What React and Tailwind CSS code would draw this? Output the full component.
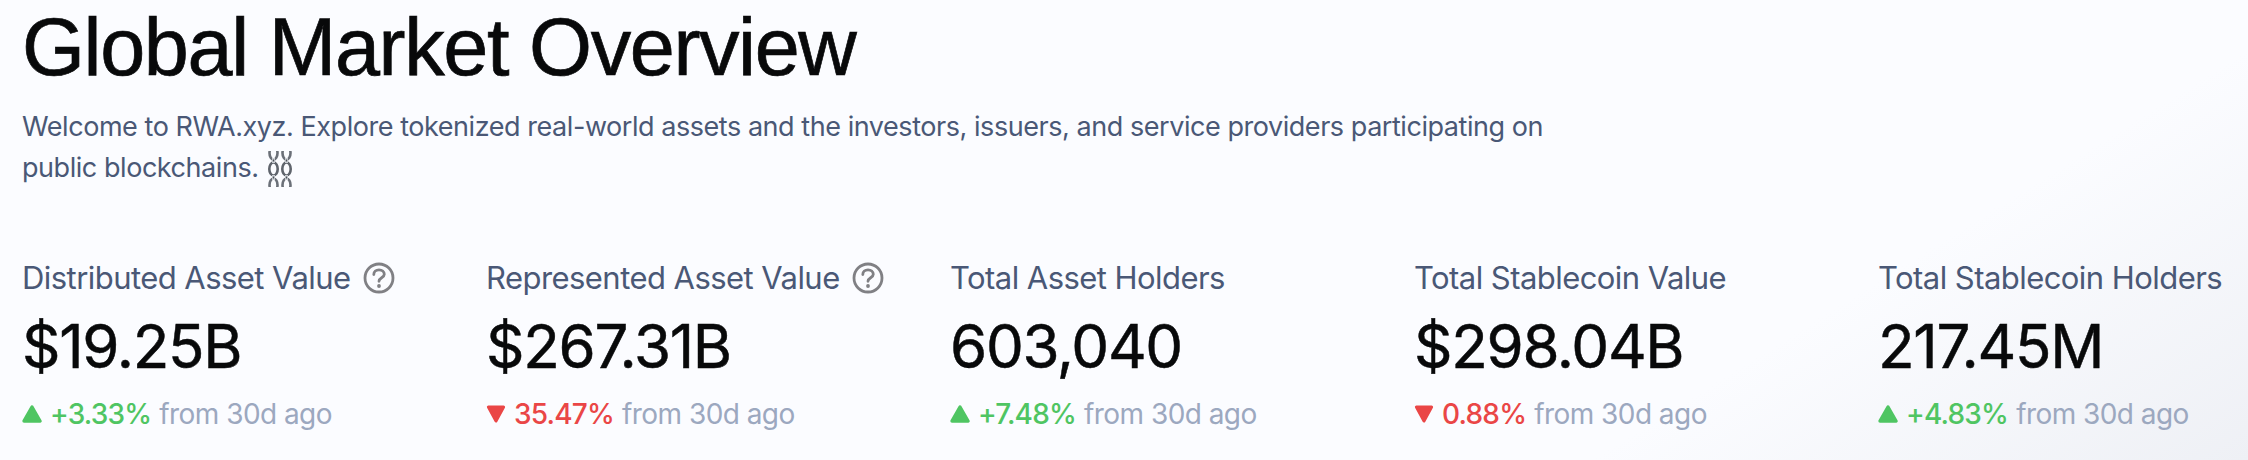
import React from 'react';

const stats = [
  { key: 'dav', label: 'Distributed Asset Value', value: '$19.25B', change: '+3.33%', up: true, help: true },
  { key: 'rav', label: 'Represented Asset Value', value: '$267.31B', change: '35.47%', up: false, help: true },
  { key: 'holders', label: 'Total Asset Holders', value: '603,040', change: '+7.48%', up: true },
  { key: 'stable', label: 'Total Stablecoin Value', value: '$298.04B', change: '0.88%', up: false },
  { key: 'stableHolders', label: 'Total Stablecoin Holders', value: '217.45M', change: '+4.83%', up: true },
];

const HelpIcon = () => (
  <svg width="32" height="32" viewBox="0 0 32 32" fill="none" className="shrink-0">
    <circle cx="16" cy="16" r="14" stroke="#808084" strokeWidth="2.8" />
    <path d="M10.8 12.6c0-3 2.3-4.7 5.2-4.7 3 0 5.3 1.8 5.3 4.4 0 3.6-5.3 3.4-5.3 7" stroke="#808084" strokeWidth="2.8" strokeLinecap="round" />
    <circle cx="16" cy="24" r="1.9" fill="#808084" />
  </svg>
);

const Arrow = ({ up }) => (
  <svg width="20" height="20" viewBox="0 0 20 20" className="shrink-0">
    {up ? (
      <path d="M10 3 L18 17 H2 Z" fill="#4fc562" stroke="#4fc562" strokeWidth="3.4" strokeLinejoin="round" />
    ) : (
      <path d="M2.4 3 H17.6 L10 17 Z" fill="#ea4646" stroke="#ea4646" strokeWidth="3" strokeLinejoin="round" />
    )}
  </svg>
);

const Chain = ({ x }) => (
  <g transform={`translate(${x} 0)`} fill="none">
    <ellipse cx="5.5" cy="2" rx="4" ry="6.5" stroke="#6b7078" strokeWidth="2.6" />
    <ellipse cx="5.5" cy="18" rx="4.2" ry="6.5" stroke="#5f646c" strokeWidth="2.6" />
    <ellipse cx="5.5" cy="34" rx="4" ry="6.5" stroke="#6b7078" strokeWidth="2.6" />
    <path d="M5.5 7v5M5.5 24v5" stroke="#c9cdd2" strokeWidth="3" />
    <path d="M5.5 8.5v2M5.5 25.5v2" stroke="#4a4f57" strokeWidth="1.4" />
  </g>
);

const ChainEmoji = () => (
  <svg width="26" height="36" viewBox="0 0 26 36" className="inline-block align-middle ml-[8px] -mt-[2px]">
    <Chain x={1} />
    <Chain x={14} />
  </svg>
);

export default function App() {
  return (
    <div className="w-[2248px] h-[460px] overflow-hidden bg-[linear-gradient(148deg,#fbfcff_0%,#fbfcff_78%,#eef0f5_100%)] pl-[22px] font-['Inter',sans-serif]">
      <h1 className="pt-[5px] text-[81px] leading-[84px] text-[#08090a] tracking-[-1.4px] [-webkit-text-stroke:0.7px_#08090a] font-['Liberation_Sans',sans-serif]">
        Global Market Overview
      </h1>
      <p className="mt-[17px] w-[1560px] text-[27px] leading-[41px] text-[#4a5876] tracking-[-0.45px]">
        Welcome to RWA.xyz. Explore tokenized real-world assets and the investors, issuers, and service providers participating on public blockchains.
        <ChainEmoji />
      </p>
      <div className="flex mt-[74px]">
        {stats.map((stat) => (
          <div key={stat.key} className="w-[464px] shrink-0">
            <div className="flex items-center gap-3 h-[32px] text-[31px] text-[#4a5876] tracking-[-0.55px]">
              {stat.label}
              {stat.help && <HelpIcon />}
            </div>
            <div className="mt-[18px] text-[60px] leading-[68px] text-[#08090a] tracking-[-1.3px] [-webkit-text-stroke:0.5px_#08090a]">
              {stat.value}
            </div>
            <div className="mt-[17px] flex items-center gap-2 text-[28px] leading-[34px] tracking-[-0.55px]">
              <Arrow up={stat.up} />
              <span className={`font-medium tracking-[-0.8px] ${stat.up ? 'text-[#4fc562]' : 'text-[#ea4646]'}`}>{stat.change}</span>
              <span className="text-[#9ca8bf]">from 30d ago</span>
            </div>
          </div>
        ))}
      </div>
    </div>
  );
}
